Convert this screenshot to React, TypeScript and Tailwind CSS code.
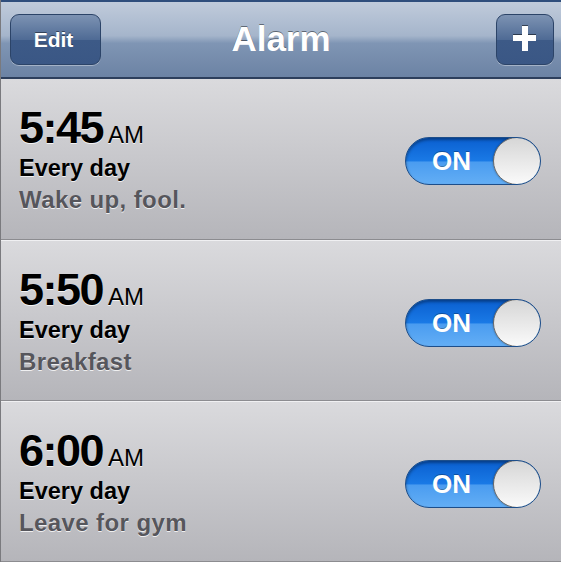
interface Alarm {
  time: string;
  repeat: string;
  label: string;
}

const ALARMS: Alarm[] = [
  { time: "5:45", repeat: "Every day", label: "Wake up, fool." },
  { time: "5:50", repeat: "Every day", label: "Breakfast" },
  { time: "6:00", repeat: "Every day", label: "Leave for gym" },
];

const font = { fontFamily: '"Liberation Sans", Arial, sans-serif' };

function Toggle() {
  return (
    <div className="relative mt-[4px] w-[136px] h-[48px] rounded-full border border-[#1d4e8a] bg-[linear-gradient(#0a5fd0,#1a7ae6_50%,#4a9cf0_52%,#63aef5)] shadow-[inset_0_2px_3px_rgba(0,0,0,0.35)] overflow-hidden">
      <span className="absolute left-[26px] top-[10px] text-white text-[26px] font-bold leading-none [text-shadow:0_-1px_0_rgba(0,0,0,0.3)]">
        ON
      </span>
      <div className="absolute right-[-1px] top-[-1px] w-[48px] h-[48px] rounded-full border border-[#6a6a6a] bg-[linear-gradient(#d6d6d6,#fafafa)] shadow-[0_0_2px_rgba(0,0,0,0.4)]" />
    </div>
  );
}

function AlarmRow({ alarm, first }: { alarm: Alarm; first?: boolean }) {
  return (
    <div
      className={`flex items-center justify-between h-[161px] pl-[18px] pr-[20px] bg-[linear-gradient(#dadadd,#b5b5ba)] border-b border-[#8c8c90] ${
        first ? "" : "border-t border-t-[#f0f0f2]"
      }`}
    >
      <div className="flex flex-col pt-[2px]">
        <div className="flex items-baseline gap-[5px] text-black [text-shadow:0_1px_0_rgba(255,255,255,0.8)]">
          <span className="text-[45px] font-bold leading-[50px] tracking-[-1.5px]">{alarm.time}</span>
          <span className="text-[24px] leading-none">AM</span>
        </div>
        <span className="text-[23.5px] font-bold leading-[30px] text-black [text-shadow:0_1px_0_rgba(255,255,255,0.8)]">
          {alarm.repeat}
        </span>
        <span className="text-[24px] font-bold leading-[34px] tracking-[0.4px] text-[#56565c] [text-shadow:0_1px_0_rgba(255,255,255,0.8)]">
          {alarm.label}
        </span>
      </div>
      <Toggle />
    </div>
  );
}

export default function App() {
  return (
    <div className="w-[561px] h-[562px] overflow-hidden bg-[#b5b5ba] border-l border-[#7a7a7e]" style={font}>
      <header className="relative flex items-center justify-between h-[79px] px-[9px] bg-[linear-gradient(#c0cbdb,#a5b5cb_45%,#7f95b4_55%,#6c83a4)] border-t-2 border-[#2f4e7c] border-b-2 border-b-[#2d3f5c]">
        <button className="w-[91px] h-[51px] pr-[4px] rounded-[9px] border border-[#2c4468] bg-[linear-gradient(#7d93b3,#4f6b95_50%,#3d5a87_52%,#3a5785)] shadow-[0_1px_0_rgba(255,255,255,0.35)] text-white text-[21px] font-bold [text-shadow:0_-1px_0_rgba(0,0,0,0.45)]">
          Edit
        </button>
        <h1 className="absolute left-0 right-0 text-center pointer-events-none text-white text-[35px] font-bold [text-shadow:0_-1px_0_rgba(0,0,0,0.45)]">
          Alarm
        </h1>
        {/* plus glyph: two bars */}
        <button className="relative w-[58px] h-[51px] mr-[-2px] rounded-[9px] border border-[#2c4468] bg-[linear-gradient(#7d93b3,#4f6b95_50%,#3d5a87_52%,#3a5785)] shadow-[0_1px_0_rgba(255,255,255,0.35)]">
          <span className="absolute left-[16px] top-[20px] w-[23px] h-[6px] bg-white shadow-[0_-1px_0_rgba(0,0,0,0.5)]" />
          <span className="absolute left-[24.5px] top-[11px] w-[6px] h-[25px] bg-white shadow-[0_-1px_0_rgba(0,0,0,0.5)]" />
        </button>
      </header>
      {ALARMS.map((a, i) => (
        <AlarmRow key={a.time} alarm={a} first={i === 0} />
      ))}
    </div>
  );
}
